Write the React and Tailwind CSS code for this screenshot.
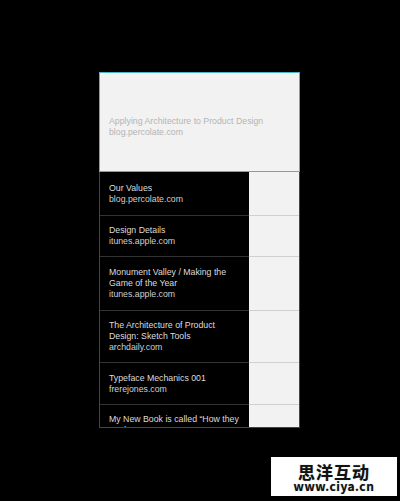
import React from "react";

const items = [
  { title: ["Our Values"], url: "blog.percolate.com", h: "h-[44px]" },
  { title: ["Design Details"], url: "itunes.apple.com", h: "h-[41px]" },
  { title: ["Monument Valley / Making the", "Game of the Year"], url: "itunes.apple.com", h: "h-[54px]" },
  { title: ["The Architecture of Product", "Design: Sketch Tools"], url: "archdaily.com", h: "h-[52px]" },
  { title: ["Typeface Mechanics 001"], url: "frerejones.com", h: "h-[42px]" },
  { title: ["My New Book is called \u201cHow they", "Made It\u201d"], url: "medium.com", h: "h-[54px]" },
];

export default function App() {
  return (
    <div
      className="relative h-[501px] w-[400px] overflow-hidden bg-black pt-[72px] pl-[99px]"
      style={{ fontFamily: '"Liberation Sans", Arial, sans-serif' }}
    >
      <div className="w-[201px]">
        {/* featured card */}
        <div className="h-[100px] border border-[#4fb4c8] bg-[#f2f2f2] pl-[9px] pt-[43px] text-[8.75px] leading-[11px] text-[#b4b4b4]">
          <div>Applying Architecture to Product Design</div>
          <div>blog.percolate.com</div>
        </div>

        {/* list */}
        <div className="h-[256px] overflow-hidden border-x border-b border-[#444]">
          {items.map((item, i) => (
            <div key={i} className={"flex " + item.h}>
              <div
                className={
                  "flex w-[149px] flex-col border-b border-[#333] bg-black px-[9px] text-[8.75px] leading-[11px] text-[#dcdcdc] " +
                  (i === items.length - 1 ? "pt-[9px]" : "justify-center")
                }
              >
                {item.title.map((line, j) => (
                  <div key={j} className="whitespace-nowrap">{line}</div>
                ))}
                <div className="text-[#cfcfcf]">{item.url}</div>
              </div>
              <div className="flex-1 border-b border-[#d0d0d0] bg-[#f2f2f2]" />
            </div>
          ))}
        </div>
      </div>

      {/* watermark */}
      <div
        className="absolute left-[271px] top-[457px] flex h-[39px] w-[126px] flex-col items-center bg-white pt-[7px] font-bold text-[#111]"
        style={{ fontFamily: '"Noto Sans CJK SC", "DejaVu Sans", sans-serif' }}
      >
        <div className="text-[17px] leading-[16px] tracking-[1px] [text-shadow:0_0_1px_#999]">思洋互动</div>
        <div className="text-[12px] leading-[12px] tracking-[0.5px] [text-shadow:0_0_1px_#999]">www.ciya.cn</div>
      </div>
    </div>
  );
}
